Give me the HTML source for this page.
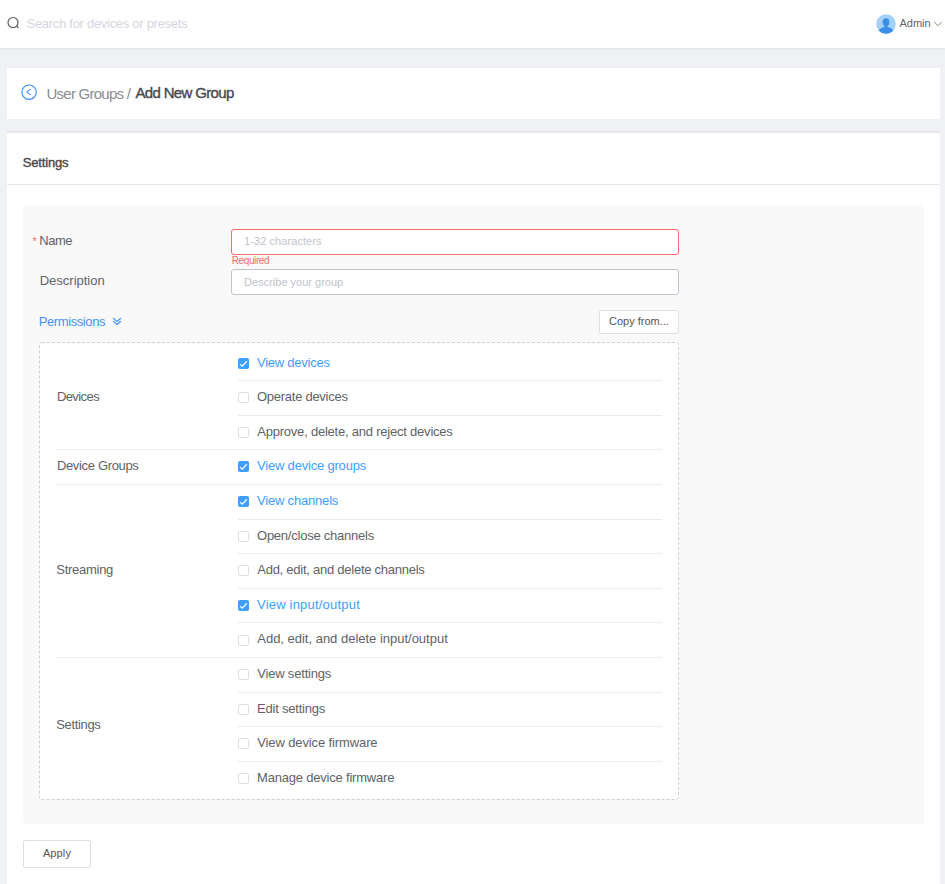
<!DOCTYPE html>
<html><head><meta charset="utf-8">
<style>
*{box-sizing:border-box;margin:0;padding:0}
html,body{width:945px;height:884px;overflow:hidden}
body{background:#eff1f5;font-family:"Liberation Sans",sans-serif;color:#606266;position:relative}
.abs{position:absolute}
.t{position:absolute;white-space:nowrap;line-height:1}
.inp{position:absolute;background:#fff;border:1px solid #c0c4cc;border-radius:3px}
.btn{position:absolute;background:#fff;border:1px solid #dcdfe6}
.sep{position:absolute;height:1px;background:#e9ebf0}
.cb{position:absolute;left:238px;width:11px;height:11px;border:1px solid #dcdfe6;border-radius:2px;background:#fff}
</style></head><body>
<div class="abs" style="left:0;top:0;width:945px;height:48px;background:#fff;box-shadow:0 1px 3px rgba(0,30,60,0.07)"></div>
<svg class="abs" style="left:6px;top:15px" width="16" height="16" viewBox="0 0 16 16"><circle cx="7" cy="7.5" r="5" fill="none" stroke="#555" stroke-width="1.1"/><line x1="10.6" y1="11.2" x2="12.5" y2="13" stroke="#555" stroke-width="1.1"/></svg>
<div id="search" class="t" style="left:26.50px;top:16.75px;font-size:13px;letter-spacing:-0.286px;color:#d3d6de">Search for devices or presets</div>
<svg class="abs" style="left:876px;top:14px" width="20" height="20" viewBox="0 0 20 20"><defs><clipPath id="av"><circle cx="10" cy="10" r="9.8"/></clipPath></defs><circle cx="10" cy="10" r="9.8" fill="#a6d1f6"/><g clip-path="url(#av)" fill="#3c8fe6"><path d="M10 4.3 C12.2 4.3 13.4 6 13.4 8 C13.4 10 12.4 11.6 11.4 12.3 L11.4 13 L8.6 13 L8.6 12.3 C7.6 11.6 6.6 10 6.6 8 C6.6 6 7.8 4.3 10 4.3Z"/><path d="M2.6 17.5 C3.4 14.6 6 13.2 8.6 13 L11.4 13 C14 13.2 16.6 14.6 17.4 17.5 L17.4 21 L2.6 21Z"/></g></svg>
<div id="admin" class="t" style="left:899.50px;top:17.79px;font-size:11px;letter-spacing:0.000px;color:#5f6368">Admin</div>
<svg class="abs" style="left:933px;top:20px" width="11" height="8" viewBox="0 0 11 8"><path d="M1.2 2 L5 5.8 L8.8 2" fill="none" stroke="#777" stroke-width="0.9"/></svg>
<div class="abs" style="left:7px;top:68px;width:933px;height:51px;background:#fff"></div>
<svg class="abs" style="left:20px;top:84px" width="18" height="18" viewBox="0 0 18 18"><circle cx="9.1" cy="8.2" r="7.2" fill="none" stroke="#3d8ef8" stroke-width="1.2"/><path d="M10.6 5.2 L6.8 8.1 L10.6 10.9" fill="none" stroke="#3d8ef8" stroke-width="1.05"/></svg>
<div id="bc1" class="t" style="left:46.50px;top:85.80px;font-size:15px;letter-spacing:-0.750px;color:#8a8d92">User Groups /</div>
<div id="bc2" class="t" style="left:135.50px;top:84.55px;font-size:15px;letter-spacing:-0.667px;color:#47494d;-webkit-text-stroke:0.38px #47494d">Add New Group</div>
<div class="abs" style="left:7px;top:131px;width:933px;height:760px;background:#fff;border-top:2px solid #e6e8ec"></div>
<div id="stitle" class="t" style="left:22.80px;top:156.30px;font-size:13px;letter-spacing:-0.171px;color:#47494d;-webkit-text-stroke:0.38px #47494d">Settings</div>
<div class="abs" style="left:7px;top:184px;width:933px;height:1px;background:#e4e7ed"></div>
<div class="abs" style="left:23px;top:205px;width:901px;height:619px;background:#f9f9fa;border-radius:2px"></div>
<div id="star" class="t" style="left:32.50px;top:235.69px;font-size:11px;letter-spacing:0.000px;color:#f56c6c">*</div>
<div id="name" class="t" style="left:39.30px;top:234.00px;font-size:13px;letter-spacing:-0.467px;color:#606266">Name</div>
<div class="inp" style="left:231px;top:229px;width:448px;height:26px;border-color:#f56c6c"></div>
<div id="ph1" class="t" style="left:244.10px;top:236.29px;font-size:11px;letter-spacing:0.072px;color:#c0c4cc">1-32 characters</div>
<div id="req" class="t" style="left:231.75px;top:255.93px;font-size:10px;letter-spacing:-0.393px;color:#f56c6c">Required</div>
<div id="desc" class="t" style="left:39.70px;top:274.00px;font-size:13px;letter-spacing:0.000px;color:#606266">Description</div>
<div class="inp" style="left:231px;top:269px;width:448px;height:26px"></div>
<div id="ph2" class="t" style="left:244.10px;top:276.69px;font-size:11px;letter-spacing:-0.000px;color:#c0c4cc">Describe your group</div>
<div id="perm" class="t" style="left:38.70px;top:315.00px;font-size:13px;letter-spacing:-0.400px;color:#4a90f0">Permissions</div>
<svg class="abs" style="left:111px;top:316px" width="11" height="10" viewBox="0 0 11 10"><path d="M2.4 2.4 L5.9 5.4 L9.5 2.4 M2.4 5.4 L5.9 8.4 L9.5 5.4" fill="none" stroke="#3d91f5" stroke-width="1.25" stroke-linecap="round" stroke-linejoin="round"/></svg>
<div class="btn" style="left:599px;top:310px;width:80px;height:24px;border-radius:2px"></div>
<div id="copy" class="t" style="left:609.00px;top:315.69px;font-size:11px;letter-spacing:0.000px;color:#555555">Copy from...</div>
<svg class="abs" style="left:39px;top:342px" width="640" height="458" viewBox="0 0 640 458"><rect x="0.5" y="0.5" width="639" height="457" rx="2.5" fill="#fff" stroke="#cfcfcf" stroke-width="1" stroke-dasharray="3 2"/></svg>
<svg class="abs" style="left:238px;top:358px" width="11" height="11" viewBox="0 0 11 11"><rect width="11" height="11" rx="2" fill="#409eff"/><path d="M2.2 6.2 L4.3 8.1 L8.8 3.3" fill="none" stroke="#fff" stroke-width="1.25"/></svg>
<div id="r0" class="t" style="left:257.00px;top:356.20px;font-size:13px;letter-spacing:-0.249px;color:#409eff">View devices</div>
<div id="c0" class="t" style="left:56.90px;top:390.00px;font-size:13px;letter-spacing:-0.582px;color:#606266">Devices</div>
<div class="sep" style="left:238px;width:424px;top:380px"></div>
<div class="cb" style="top:392px"></div>
<div id="r1" class="t" style="left:257.00px;top:390.30px;font-size:13px;letter-spacing:-0.269px;color:#606266">Operate devices</div>
<div class="sep" style="left:238px;width:424px;top:415px"></div>
<div class="cb" style="top:427px"></div>
<div id="r2" class="t" style="left:257.25px;top:425.30px;font-size:13px;letter-spacing:-0.220px;color:#606266">Approve, delete, and reject devices</div>
<div class="sep" style="left:56px;width:606px;top:449px"></div>
<svg class="abs" style="left:238px;top:461px" width="11" height="11" viewBox="0 0 11 11"><rect width="11" height="11" rx="2" fill="#409eff"/><path d="M2.2 6.2 L4.3 8.1 L8.8 3.3" fill="none" stroke="#fff" stroke-width="1.25"/></svg>
<div id="r3" class="t" style="left:257.00px;top:459.30px;font-size:13px;letter-spacing:-0.192px;color:#409eff">View device groups</div>
<div id="c3" class="t" style="left:56.90px;top:459.20px;font-size:13px;letter-spacing:-0.334px;color:#606266">Device Groups</div>
<div class="sep" style="left:56px;width:606px;top:484px"></div>
<svg class="abs" style="left:238px;top:496px" width="11" height="11" viewBox="0 0 11 11"><rect width="11" height="11" rx="2" fill="#409eff"/><path d="M2.2 6.2 L4.3 8.1 L8.8 3.3" fill="none" stroke="#fff" stroke-width="1.25"/></svg>
<div id="r4" class="t" style="left:257.00px;top:494.30px;font-size:13px;letter-spacing:-0.189px;color:#409eff">View channels</div>
<div id="c4" class="t" style="left:56.30px;top:563.20px;font-size:13px;letter-spacing:-0.275px;color:#606266">Streaming</div>
<div class="sep" style="left:238px;width:424px;top:519px"></div>
<div class="cb" style="top:531px"></div>
<div id="r5" class="t" style="left:257.00px;top:529.30px;font-size:13px;letter-spacing:-0.236px;color:#606266">Open/close channels</div>
<div class="sep" style="left:238px;width:424px;top:553px"></div>
<div class="cb" style="top:565px"></div>
<div id="r6" class="t" style="left:257.25px;top:563.30px;font-size:13px;letter-spacing:-0.252px;color:#606266">Add, edit, and delete channels</div>
<div class="sep" style="left:238px;width:424px;top:588px"></div>
<svg class="abs" style="left:238px;top:600px" width="11" height="11" viewBox="0 0 11 11"><rect width="11" height="11" rx="2" fill="#409eff"/><path d="M2.2 6.2 L4.3 8.1 L8.8 3.3" fill="none" stroke="#fff" stroke-width="1.25"/></svg>
<div id="r7" class="t" style="left:257.00px;top:598.30px;font-size:13px;letter-spacing:0.204px;color:#409eff">View input/output</div>
<div class="sep" style="left:238px;width:424px;top:622px"></div>
<div class="cb" style="top:635px"></div>
<div id="r8" class="t" style="left:257.25px;top:632.30px;font-size:13px;letter-spacing:-0.010px;color:#606266">Add, edit, and delete input/output</div>
<div class="sep" style="left:56px;width:606px;top:657px"></div>
<div class="cb" style="top:669px"></div>
<div id="r9" class="t" style="left:257.25px;top:667.30px;font-size:13px;letter-spacing:-0.186px;color:#606266">View settings</div>
<div id="c9" class="t" style="left:56.30px;top:718.20px;font-size:13px;letter-spacing:-0.357px;color:#606266">Settings</div>
<div class="sep" style="left:238px;width:424px;top:692px"></div>
<div class="cb" style="top:704px"></div>
<div id="r10" class="t" style="left:257.00px;top:702.30px;font-size:13px;letter-spacing:-0.208px;color:#606266">Edit settings</div>
<div class="sep" style="left:238px;width:424px;top:726px"></div>
<div class="cb" style="top:738px"></div>
<div id="r11" class="t" style="left:257.25px;top:736.30px;font-size:13px;letter-spacing:-0.119px;color:#606266">View device firmware</div>
<div class="sep" style="left:238px;width:424px;top:761px"></div>
<div class="cb" style="top:773px"></div>
<div id="r12" class="t" style="left:257.00px;top:771.30px;font-size:13px;letter-spacing:-0.201px;color:#606266">Manage device firmware</div>
<div class="btn" style="left:23px;top:840px;width:68px;height:28px;border-radius:2px"></div>
<div id="apply" class="t" style="left:42.90px;top:848.09px;font-size:11px;letter-spacing:0.125px;color:#555555">Apply</div>
</body></html>
